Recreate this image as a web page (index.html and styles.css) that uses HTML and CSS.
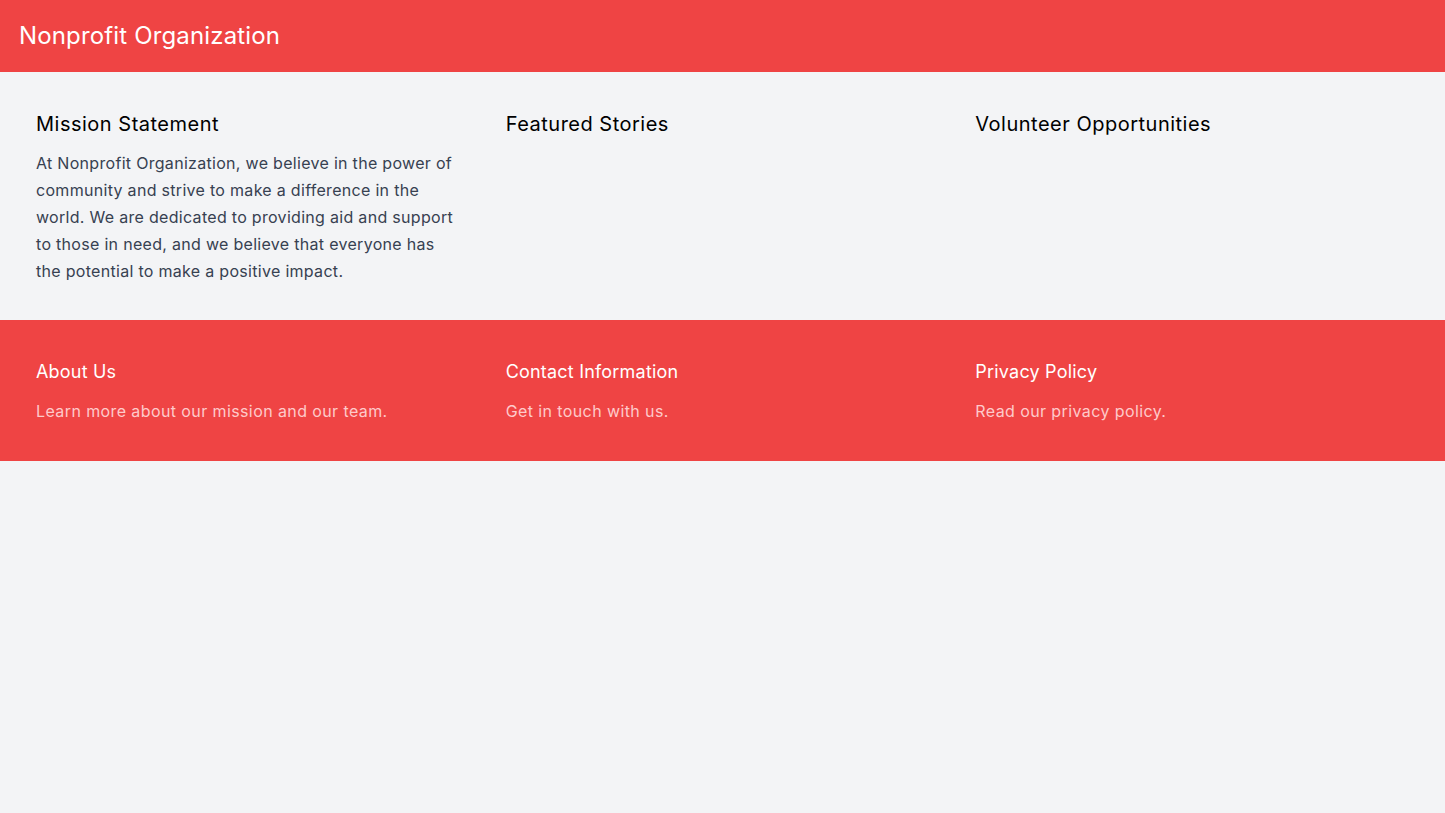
FILE: index.html
```html
<!DOCTYPE html>
<html>
<head>
<meta charset="utf-8">
<title>Nonprofit Organization</title>
<link rel="stylesheet" href="styles.css">
</head>
<body>
<header class="topbar">
  <h1 class="brand">Nonprofit Organization</h1>
</header>
<main class="content">
  <section class="col">
    <h2 class="col-title">Mission Statement</h2>
    <p class="col-text">At Nonprofit Organization, we believe in the power of community and strive to make a difference in the world. We are dedicated to providing aid and support to those in need, and we believe that everyone has the potential to make a positive impact.</p>
  </section>
  <section class="col">
    <h2 class="col-title">Featured Stories</h2>
  </section>
  <section class="col">
    <h2 class="col-title">Volunteer Opportunities</h2>
  </section>
</main>
<footer class="footer">
  <div class="col">
    <h3 class="foot-title">About Us</h3>
    <p class="foot-text">Learn more about our mission and our team.</p>
  </div>
  <div class="col">
    <h3 class="foot-title">Contact Information</h3>
    <p class="foot-text">Get in touch with us.</p>
  </div>
  <div class="col">
    <h3 class="foot-title">Privacy Policy</h3>
    <p class="foot-text">Read our privacy policy.</p>
  </div>
</footer>
</body>
</html>
```
FILE: styles.css
```css
* { box-sizing: border-box; }
html, body { margin: 0; padding: 0; }
body {
  background: #f3f4f6;
  font-family: Inter, "Noto Sans", sans-serif;
  min-height: 813px;
}
.topbar {
  background: #ef4444;
  padding: 20px 19px 20px;
}
.brand {
  margin: 0;
  font-size: 24px;
  line-height: 32px;
  font-weight: 400;
  letter-spacing: 0.15px;
  color: #ffffff;
}
.content, .footer {
  display: grid;
  grid-template-columns: repeat(3, 1fr);
  column-gap: 36px;
  padding: 38px 36px 35px;
}
.footer {
  background: #ef4444;
  padding-bottom: 36px;
}
.col-title {
  margin: 0;
  font-size: 20px;
  line-height: 28px;
  font-weight: 400;
  letter-spacing: 0.5px;
  color: #000000;
}
.col-text {
  margin: 12px 0 0;
  padding-right: 10px;
  font-size: 16px;
  line-height: 27px;
  letter-spacing: 0.3px;
  color: #374151;
}
.foot-title {
  margin: 0;
  font-size: 18px;
  line-height: 28px;
  font-weight: 400;
  letter-spacing: 0.2px;
  color: #ffffff;
}
.foot-text {
  margin: 12px 0 0;
  font-size: 16px;
  line-height: 27px;
  letter-spacing: 0.4px;
  color: #fecaca;
}
```
